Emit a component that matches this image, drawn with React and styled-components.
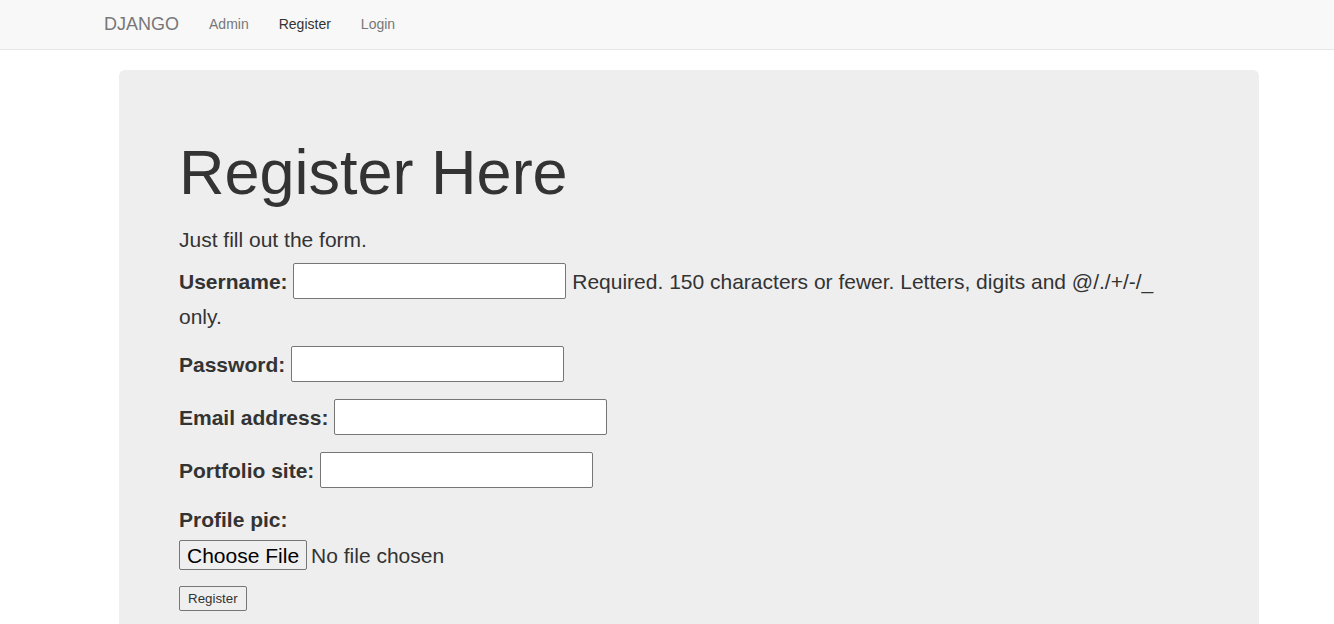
import React from 'react'
import styled, { createGlobalStyle } from 'styled-components'

//Page base styles (bootstrap-like)
const GlobalStyle = createGlobalStyle`
  * { box-sizing: border-box; }
  body {
    margin: 0;
    font-family: "Liberation Sans", Arial, sans-serif;
    font-size: 14px;
    line-height: 1.42857143;
    color: #333;
    background: #fff;
  }
`

const navLinks = [
  { label: 'Admin', href: '#admin' },
  { label: 'Register', href: '#register', active: true },
  { label: 'Login', href: '#login' },
]

const fields = [
  { id: 'username', label: 'Username:', type: 'text', help: 'Required. 150 characters or fewer. Letters, digits and @/./+/-/_ only.' },
  { id: 'password', label: 'Password:', type: 'password' },
  { id: 'email', label: 'Email address:', type: 'email' },
  { id: 'portfolio', label: 'Portfolio site:', type: 'url' },
]

//Register page
const App = () => {
  return <>
    <GlobalStyle />
    {/* Top navigation */}
    <Navbar>
      <Brand href='#home'>DJANGO</Brand>
      <NavList>
        {navLinks.map(link => (
          <li key={link.label}>
            <NavLink href={link.href} $active={link.active}>{link.label}</NavLink>
          </li>
        ))}
      </NavList>
    </Navbar>
    {/* Jumbotron with the form */}
    <Main>
      <Jumbotron>
        <Title>Register Here</Title>
        <Lead>Just fill out the form.</Lead>
        <form onSubmit={e => e.preventDefault()}>
          {fields.map(f => (
            <Field key={f.id}>
              <Label htmlFor={f.id}>{f.label}</Label> <TextInput id={f.id} type={f.type} />
              {f.help && <> <HelpText>{f.help}</HelpText></>}
            </Field>
          ))}
          <Field $stacked>
            <Label htmlFor='pic'>Profile pic:</Label>
            <FileInput id='pic' type='file' />
          </Field>
          <SubmitButton type='submit'>Register</SubmitButton>
        </form>
      </Jumbotron>
    </Main>
  </>
}

//Component styles
const Navbar = styled.nav`
  display: flex;
  align-items: flex-start;
  height: 50px;
  padding-left: 89px;
  background: #f8f8f8;
  border-bottom: 1px solid #e7e7e7;
  margin-bottom: 20px;
`

const Brand = styled.a`
  display: block;
  height: 49px;
  padding: 14px 15px 15px;
  font-size: 18px;
  line-height: 20px;
  color: #777;
  text-decoration: none;
`

const NavList = styled.ul`
  display: flex;
  list-style: none;
  margin: 0;
  padding: 0;
`

const NavLink = styled.a`
  display: block;
  padding: 14px 15px 15px;
  line-height: 20px;
  font-size: 14px;
  color: ${p => p.$active ? '#333' : '#777'};
  text-decoration: none;
`

const Main = styled.main`
  padding-left: 119px;
`

const Jumbotron = styled.section`
  width: 1140px;
  padding: 48px 60px;
  background: #eee;
  border-radius: 6px;
`

const Title = styled.h1`
  margin: 20px 0 18px;
  font-size: 63px;
  font-weight: 500;
  line-height: 1.1;
  color: #333;
`

const Lead = styled.p`
  margin: 0 0 9px;
  font-size: 21px;
  line-height: 30px;
`

const Field = styled.p`
  margin: 0 0 15px;
  font-size: 21px;
  line-height: 30px;
  ${p => p.$stacked && `
    margin-top: -1px;
    label { margin-bottom: 5px; }
  `}
`

const Label = styled.label`
  display: inline-block;
  font-weight: 700;
`

const TextInput = styled.input`
  display: inline-block;
  width: 273px;
  height: 36px;
  margin: -1px 0 3px;
  padding: 1px 2px;
  vertical-align: middle;
  border: 1px solid #767676;
  border-radius: 2px;
  background: #fff;
  font: 13.33px "Liberation Sans", Arial, sans-serif;
`

const HelpText = styled.span`
  color: #333;
`

const FileInput = styled.input`
  display: block;
  font-family: "Liberation Sans", Arial, sans-serif;
  font-size: 21px;
  line-height: 30px;
  color: #333;

  &::file-selector-button {
    font: inherit;
    color: #000;
    height: 30px;
    padding: 0 7px;
    margin-right: 4px;
    background: #efefef;
    border: 1px solid #767676;
    border-radius: 2px;
  }
`

const SubmitButton = styled.button`
  display: block;
  height: 25px;
  padding: 0 8px;
  font: 13.33px "Liberation Sans", Arial, sans-serif;
  color: #333;
  background: #efefef;
  border: 1px solid #767676;
  border-radius: 2px;
`

export default App
